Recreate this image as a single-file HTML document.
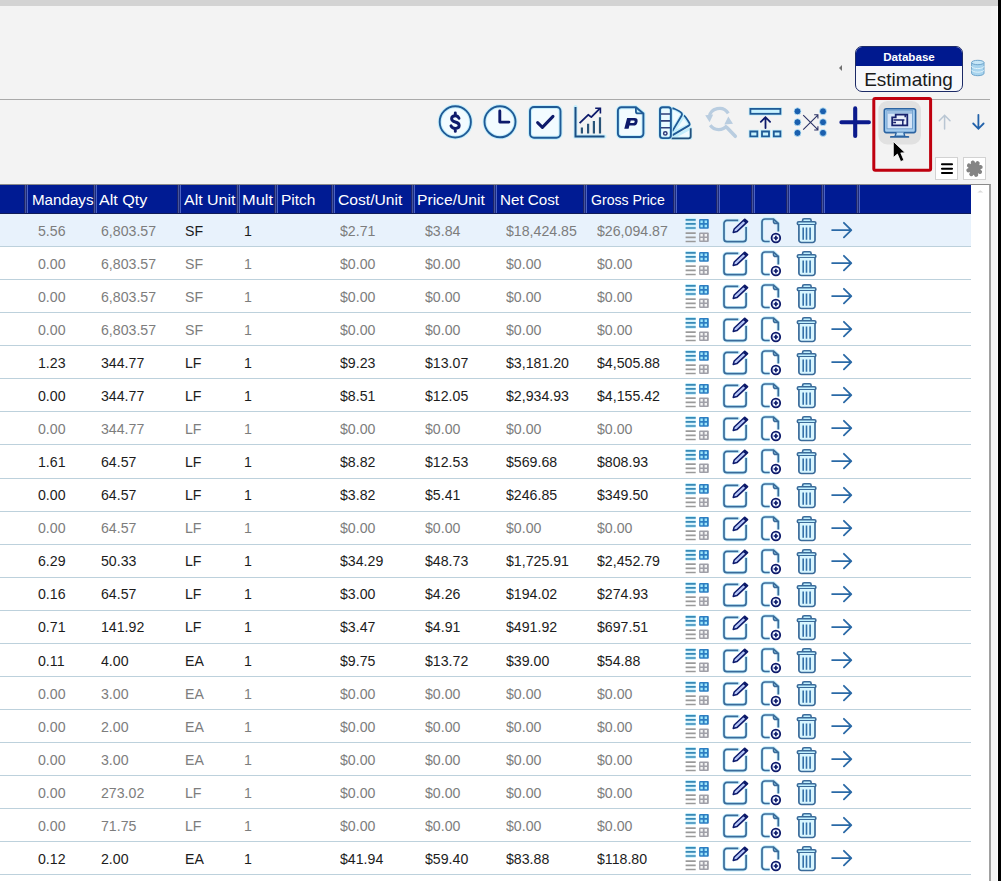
<!DOCTYPE html><html><head><meta charset="utf-8"><style>
*{margin:0;padding:0;box-sizing:border-box}
html,body{width:1001px;height:881px;overflow:hidden;background:#f3f3f3;font-family:"Liberation Sans",sans-serif;position:relative}
.a{position:absolute}
#topbar{left:0;top:0;width:998px;height:6px;background:#d3d3d3}
#blk{left:998px;top:0;width:3px;height:881px;background:#000}
#hline{left:0;top:99px;width:990px;height:1px;background:#a9a9a9}
#grid{left:0;top:184px;width:991px;height:697px;background:#fff;border-top:1px solid #8a8a8a;border-right:2px solid #a0a0a0}
#hdr{left:0;top:185px;width:971px;height:29px;background:#001b93;border-bottom:1px solid #101c58}
.ht{position:absolute;top:191px;transform-origin:0 0;color:#fff;font-size:15.2px;line-height:17px;white-space:nowrap}
.sep{position:absolute;top:185px;width:4px;height:28px;border-left:1px solid #1c2468;border-right:1px solid #4a62c4;background:linear-gradient(90deg,#46559e 0 50%,#1a2a80 50% 100%)}
.row{position:absolute;left:0;width:971px;border-bottom:1px solid #bdd1dc}
.sel{background:#e8f2fc}
.dt{position:absolute;font-size:14.3px;line-height:16px;transform:scale(0.99,1.06);transform-origin:0 13px;white-space:nowrap}

#dbbox{left:854.5px;top:45.5px;width:108px;height:46.5px;border:1.5px solid #1c2a66;border-radius:7px;background:#f7f8fb;overflow:hidden}
#dbh{position:absolute;left:0;top:0;width:100%;height:19px;background:#00198f;color:#fff;font-weight:bold;font-size:11.6px;line-height:19px;text-align:center;padding-left:1px}
#dbv{position:absolute;left:0;top:21.5px;width:100%;text-align:center;font-size:19px;line-height:24px;color:#1a1a1a}
#larr{left:839px;top:65px;width:0;height:0;border-top:3px solid transparent;border-bottom:3px solid transparent;border-right:3px solid #707070}
.btn{position:absolute;top:156.5px;width:23px;height:23px;background:#fff;border:1px solid #d2d2d2}
#scroll{left:971px;top:185px;width:18px;height:696px;background:#fff}
#sgray{left:991px;top:6px;width:7px;height:875px;background:#f5f5f5;border-right:1px solid #fdfdfd}

.g{color:#7d7d7d}.k{color:#1c1c1c}
</style></head><body>
<div class="a" id="sgray"></div>
<div class="a" id="topbar"></div>
<div class="a" id="hline"></div>
<div class="a" id="grid"></div>
<div class="a" id="hdr"></div>
<div class="sep" style="left:24.0px"></div>
<div class="sep" style="left:92.5px"></div>
<div class="sep" style="left:177.0px"></div>
<div class="sep" style="left:236.0px"></div>
<div class="sep" style="left:273.5px"></div>
<div class="sep" style="left:330.5px"></div>
<div class="sep" style="left:410.5px"></div>
<div class="sep" style="left:493.0px"></div>
<div class="sep" style="left:583.0px"></div>
<div class="sep" style="left:673.0px"></div>
<div class="sep" style="left:715.5px"></div>
<div class="sep" style="left:750.5px"></div>
<div class="sep" style="left:785.5px"></div>
<div class="sep" style="left:821.0px"></div>
<div class="sep" style="left:856.4px"></div>
<div class="ht" style="left:31.9px;transform:scaleX(1.0)">Mandays</div>
<div class="ht" style="left:99.4px;transform:scaleX(1.06)">Alt Qty</div>
<div class="ht" style="left:184px;transform:scaleX(1.05)">Alt Unit</div>
<div class="ht" style="left:241.8px;transform:scaleX(1.08)">Mult</div>
<div class="ht" style="left:281.2px;transform:scaleX(1.02)">Pitch</div>
<div class="ht" style="left:338px;transform:scaleX(1.03)">Cost/Unit</div>
<div class="ht" style="left:417px;transform:scaleX(1.03)">Price/Unit</div>
<div class="ht" style="left:500px;transform:scaleX(1.0)">Net Cost</div>
<div class="ht" style="left:590.6px;transform:scaleX(0.93)">Gross Price</div>
<div class="row sel" style="top:214px;height:33px"></div>
<div class="dt g" style="left:37.5px;top:222.6px">5.56</div>
<div class="dt g" style="left:100.5px;top:222.6px">6,803.57</div>
<div class="dt k" style="left:184.5px;top:222.6px">SF</div>
<div class="dt k" style="left:243.5px;top:222.6px">1</div>
<div class="dt g" style="left:339.5px;top:222.6px">$2.71</div>
<div class="dt g" style="left:424.5px;top:222.6px">$3.84</div>
<div class="dt g" style="left:506px;top:222.6px">$18,424.85</div>
<div class="dt g" style="left:597px;top:222.6px">$26,094.87</div>
<div class="row" style="top:247px;height:33px"></div>
<div class="dt g" style="left:37.5px;top:255.7px">0.00</div>
<div class="dt g" style="left:100.5px;top:255.7px">6,803.57</div>
<div class="dt g" style="left:184.5px;top:255.7px">SF</div>
<div class="dt g" style="left:243.5px;top:255.7px">1</div>
<div class="dt g" style="left:339.5px;top:255.7px">$0.00</div>
<div class="dt g" style="left:424.5px;top:255.7px">$0.00</div>
<div class="dt g" style="left:506px;top:255.7px">$0.00</div>
<div class="dt g" style="left:597px;top:255.7px">$0.00</div>
<div class="row" style="top:280px;height:33px"></div>
<div class="dt g" style="left:37.5px;top:288.7px">0.00</div>
<div class="dt g" style="left:100.5px;top:288.7px">6,803.57</div>
<div class="dt g" style="left:184.5px;top:288.7px">SF</div>
<div class="dt g" style="left:243.5px;top:288.7px">1</div>
<div class="dt g" style="left:339.5px;top:288.7px">$0.00</div>
<div class="dt g" style="left:424.5px;top:288.7px">$0.00</div>
<div class="dt g" style="left:506px;top:288.7px">$0.00</div>
<div class="dt g" style="left:597px;top:288.7px">$0.00</div>
<div class="row" style="top:313px;height:33px"></div>
<div class="dt g" style="left:37.5px;top:321.8px">0.00</div>
<div class="dt g" style="left:100.5px;top:321.8px">6,803.57</div>
<div class="dt g" style="left:184.5px;top:321.8px">SF</div>
<div class="dt g" style="left:243.5px;top:321.8px">1</div>
<div class="dt g" style="left:339.5px;top:321.8px">$0.00</div>
<div class="dt g" style="left:424.5px;top:321.8px">$0.00</div>
<div class="dt g" style="left:506px;top:321.8px">$0.00</div>
<div class="dt g" style="left:597px;top:321.8px">$0.00</div>
<div class="row" style="top:346px;height:33px"></div>
<div class="dt k" style="left:37.5px;top:354.9px">1.23</div>
<div class="dt k" style="left:100.5px;top:354.9px">344.77</div>
<div class="dt k" style="left:184.5px;top:354.9px">LF</div>
<div class="dt k" style="left:243.5px;top:354.9px">1</div>
<div class="dt k" style="left:339.5px;top:354.9px">$9.23</div>
<div class="dt k" style="left:424.5px;top:354.9px">$13.07</div>
<div class="dt k" style="left:506px;top:354.9px">$3,181.20</div>
<div class="dt k" style="left:597px;top:354.9px">$4,505.88</div>
<div class="row" style="top:379px;height:33px"></div>
<div class="dt k" style="left:37.5px;top:388.0px">0.00</div>
<div class="dt k" style="left:100.5px;top:388.0px">344.77</div>
<div class="dt k" style="left:184.5px;top:388.0px">LF</div>
<div class="dt k" style="left:243.5px;top:388.0px">1</div>
<div class="dt k" style="left:339.5px;top:388.0px">$8.51</div>
<div class="dt k" style="left:424.5px;top:388.0px">$12.05</div>
<div class="dt k" style="left:506px;top:388.0px">$2,934.93</div>
<div class="dt k" style="left:597px;top:388.0px">$4,155.42</div>
<div class="row" style="top:412px;height:33px"></div>
<div class="dt g" style="left:37.5px;top:421.0px">0.00</div>
<div class="dt g" style="left:100.5px;top:421.0px">344.77</div>
<div class="dt g" style="left:184.5px;top:421.0px">LF</div>
<div class="dt g" style="left:243.5px;top:421.0px">1</div>
<div class="dt g" style="left:339.5px;top:421.0px">$0.00</div>
<div class="dt g" style="left:424.5px;top:421.0px">$0.00</div>
<div class="dt g" style="left:506px;top:421.0px">$0.00</div>
<div class="dt g" style="left:597px;top:421.0px">$0.00</div>
<div class="row" style="top:445px;height:34px"></div>
<div class="dt k" style="left:37.5px;top:454.1px">1.61</div>
<div class="dt k" style="left:100.5px;top:454.1px">64.57</div>
<div class="dt k" style="left:184.5px;top:454.1px">LF</div>
<div class="dt k" style="left:243.5px;top:454.1px">1</div>
<div class="dt k" style="left:339.5px;top:454.1px">$8.82</div>
<div class="dt k" style="left:424.5px;top:454.1px">$12.53</div>
<div class="dt k" style="left:506px;top:454.1px">$569.68</div>
<div class="dt k" style="left:597px;top:454.1px">$808.93</div>
<div class="row" style="top:479px;height:33px"></div>
<div class="dt k" style="left:37.5px;top:487.2px">0.00</div>
<div class="dt k" style="left:100.5px;top:487.2px">64.57</div>
<div class="dt k" style="left:184.5px;top:487.2px">LF</div>
<div class="dt k" style="left:243.5px;top:487.2px">1</div>
<div class="dt k" style="left:339.5px;top:487.2px">$3.82</div>
<div class="dt k" style="left:424.5px;top:487.2px">$5.41</div>
<div class="dt k" style="left:506px;top:487.2px">$246.85</div>
<div class="dt k" style="left:597px;top:487.2px">$349.50</div>
<div class="row" style="top:512px;height:33px"></div>
<div class="dt g" style="left:37.5px;top:520.2px">0.00</div>
<div class="dt g" style="left:100.5px;top:520.2px">64.57</div>
<div class="dt g" style="left:184.5px;top:520.2px">LF</div>
<div class="dt g" style="left:243.5px;top:520.2px">1</div>
<div class="dt g" style="left:339.5px;top:520.2px">$0.00</div>
<div class="dt g" style="left:424.5px;top:520.2px">$0.00</div>
<div class="dt g" style="left:506px;top:520.2px">$0.00</div>
<div class="dt g" style="left:597px;top:520.2px">$0.00</div>
<div class="row" style="top:545px;height:33px"></div>
<div class="dt k" style="left:37.5px;top:553.3px">6.29</div>
<div class="dt k" style="left:100.5px;top:553.3px">50.33</div>
<div class="dt k" style="left:184.5px;top:553.3px">LF</div>
<div class="dt k" style="left:243.5px;top:553.3px">1</div>
<div class="dt k" style="left:339.5px;top:553.3px">$34.29</div>
<div class="dt k" style="left:424.5px;top:553.3px">$48.73</div>
<div class="dt k" style="left:506px;top:553.3px">$1,725.91</div>
<div class="dt k" style="left:597px;top:553.3px">$2,452.79</div>
<div class="row" style="top:578px;height:33px"></div>
<div class="dt k" style="left:37.5px;top:586.4px">0.16</div>
<div class="dt k" style="left:100.5px;top:586.4px">64.57</div>
<div class="dt k" style="left:184.5px;top:586.4px">LF</div>
<div class="dt k" style="left:243.5px;top:586.4px">1</div>
<div class="dt k" style="left:339.5px;top:586.4px">$3.00</div>
<div class="dt k" style="left:424.5px;top:586.4px">$4.26</div>
<div class="dt k" style="left:506px;top:586.4px">$194.02</div>
<div class="dt k" style="left:597px;top:586.4px">$274.93</div>
<div class="row" style="top:611px;height:33px"></div>
<div class="dt k" style="left:37.5px;top:619.4px">0.71</div>
<div class="dt k" style="left:100.5px;top:619.4px">141.92</div>
<div class="dt k" style="left:184.5px;top:619.4px">LF</div>
<div class="dt k" style="left:243.5px;top:619.4px">1</div>
<div class="dt k" style="left:339.5px;top:619.4px">$3.47</div>
<div class="dt k" style="left:424.5px;top:619.4px">$4.91</div>
<div class="dt k" style="left:506px;top:619.4px">$491.92</div>
<div class="dt k" style="left:597px;top:619.4px">$697.51</div>
<div class="row" style="top:644px;height:33px"></div>
<div class="dt k" style="left:37.5px;top:652.5px">0.11</div>
<div class="dt k" style="left:100.5px;top:652.5px">4.00</div>
<div class="dt k" style="left:184.5px;top:652.5px">EA</div>
<div class="dt k" style="left:243.5px;top:652.5px">1</div>
<div class="dt k" style="left:339.5px;top:652.5px">$9.75</div>
<div class="dt k" style="left:424.5px;top:652.5px">$13.72</div>
<div class="dt k" style="left:506px;top:652.5px">$39.00</div>
<div class="dt k" style="left:597px;top:652.5px">$54.88</div>
<div class="row" style="top:677px;height:33px"></div>
<div class="dt g" style="left:37.5px;top:685.6px">0.00</div>
<div class="dt g" style="left:100.5px;top:685.6px">3.00</div>
<div class="dt g" style="left:184.5px;top:685.6px">EA</div>
<div class="dt g" style="left:243.5px;top:685.6px">1</div>
<div class="dt g" style="left:339.5px;top:685.6px">$0.00</div>
<div class="dt g" style="left:424.5px;top:685.6px">$0.00</div>
<div class="dt g" style="left:506px;top:685.6px">$0.00</div>
<div class="dt g" style="left:597px;top:685.6px">$0.00</div>
<div class="row" style="top:710px;height:33px"></div>
<div class="dt g" style="left:37.5px;top:718.6px">0.00</div>
<div class="dt g" style="left:100.5px;top:718.6px">2.00</div>
<div class="dt g" style="left:184.5px;top:718.6px">EA</div>
<div class="dt g" style="left:243.5px;top:718.6px">1</div>
<div class="dt g" style="left:339.5px;top:718.6px">$0.00</div>
<div class="dt g" style="left:424.5px;top:718.6px">$0.00</div>
<div class="dt g" style="left:506px;top:718.6px">$0.00</div>
<div class="dt g" style="left:597px;top:718.6px">$0.00</div>
<div class="row" style="top:743px;height:33px"></div>
<div class="dt g" style="left:37.5px;top:751.7px">0.00</div>
<div class="dt g" style="left:100.5px;top:751.7px">3.00</div>
<div class="dt g" style="left:184.5px;top:751.7px">EA</div>
<div class="dt g" style="left:243.5px;top:751.7px">1</div>
<div class="dt g" style="left:339.5px;top:751.7px">$0.00</div>
<div class="dt g" style="left:424.5px;top:751.7px">$0.00</div>
<div class="dt g" style="left:506px;top:751.7px">$0.00</div>
<div class="dt g" style="left:597px;top:751.7px">$0.00</div>
<div class="row" style="top:776px;height:33px"></div>
<div class="dt g" style="left:37.5px;top:784.8px">0.00</div>
<div class="dt g" style="left:100.5px;top:784.8px">273.02</div>
<div class="dt g" style="left:184.5px;top:784.8px">LF</div>
<div class="dt g" style="left:243.5px;top:784.8px">1</div>
<div class="dt g" style="left:339.5px;top:784.8px">$0.00</div>
<div class="dt g" style="left:424.5px;top:784.8px">$0.00</div>
<div class="dt g" style="left:506px;top:784.8px">$0.00</div>
<div class="dt g" style="left:597px;top:784.8px">$0.00</div>
<div class="row" style="top:809px;height:33px"></div>
<div class="dt g" style="left:37.5px;top:817.9px">0.00</div>
<div class="dt g" style="left:100.5px;top:817.9px">71.75</div>
<div class="dt g" style="left:184.5px;top:817.9px">LF</div>
<div class="dt g" style="left:243.5px;top:817.9px">1</div>
<div class="dt g" style="left:339.5px;top:817.9px">$0.00</div>
<div class="dt g" style="left:424.5px;top:817.9px">$0.00</div>
<div class="dt g" style="left:506px;top:817.9px">$0.00</div>
<div class="dt g" style="left:597px;top:817.9px">$0.00</div>
<div class="row" style="top:842px;height:33px"></div>
<div class="dt k" style="left:37.5px;top:850.9px">0.12</div>
<div class="dt k" style="left:100.5px;top:850.9px">2.00</div>
<div class="dt k" style="left:184.5px;top:850.9px">EA</div>
<div class="dt k" style="left:243.5px;top:850.9px">1</div>
<div class="dt k" style="left:339.5px;top:850.9px">$41.94</div>
<div class="dt k" style="left:424.5px;top:850.9px">$59.40</div>
<div class="dt k" style="left:506px;top:850.9px">$83.88</div>
<div class="dt k" style="left:597px;top:850.9px">$118.80</div>
<div class="a" id="dbbox"><div id="dbh">Database</div><div id="dbv">Estimating</div></div>
<div class="a" id="larr"></div>
<div class="btn" style="left:935px"><svg width="23" height="23" style="position:absolute;left:-1px;top:-1px"><path d="M7 7.3 H17 M7 11.7 H17 M7 16 H17" stroke="#000" stroke-width="2.1" stroke-linecap="round"/></svg></div>
<div class="btn" style="left:963px"><svg width="23" height="23" style="position:absolute;left:-1px;top:-1px"><g transform="translate(11.5,11.7) rotate(-15)" fill="#848484"><circle r="6.2"/><circle cx="0" cy="-6.3" r="2.1" transform="rotate(0)"/><circle cx="0" cy="-6.3" r="2.1" transform="rotate(45)"/><circle cx="0" cy="-6.3" r="2.1" transform="rotate(90)"/><circle cx="0" cy="-6.3" r="2.1" transform="rotate(135)"/><circle cx="0" cy="-6.3" r="2.1" transform="rotate(180)"/><circle cx="0" cy="-6.3" r="2.1" transform="rotate(225)"/><circle cx="0" cy="-6.3" r="2.1" transform="rotate(270)"/><circle cx="0" cy="-6.3" r="2.1" transform="rotate(315)"/></g></svg></div>
<div class="a" id="scroll"></div>
<svg class="a" style="left:0;top:0" width="1001" height="881"><use href="#ri" y="214"/><use href="#ri" y="247"/><use href="#ri" y="280"/><use href="#ri" y="313"/><use href="#ri" y="346"/><use href="#ri" y="379"/><use href="#ri" y="412"/><use href="#ri" y="445"/><use href="#ri" y="479"/><use href="#ri" y="512"/><use href="#ri" y="545"/><use href="#ri" y="578"/><use href="#ri" y="611"/><use href="#ri" y="644"/><use href="#ri" y="677"/><use href="#ri" y="710"/><use href="#ri" y="743"/><use href="#ri" y="776"/><use href="#ri" y="809"/><use href="#ri" y="842"/><defs><g id="ri"><g transform="translate(680,0)"><path d="M5.6 5.8 H15.7 M5.6 9.9 H15.7 M5.6 14 H15.7" stroke="#c4eefc" stroke-width="3.4"/><path d="M5.6 5.8 H15.7 M5.6 9.9 H15.7 M5.6 14 H15.7" stroke="#3889b6" stroke-width="1.7"/><rect x="19.1" y="5.1" width="9.7" height="9.7" rx="1" fill="#2c7ec2"/><path d="M20.4 6.6 h2.4 v2.4 h-2.4Z M24.6 6.6 h2.4 v2.4 h-2.4Z M20.4 10.8 h2.4 v2.4 h-2.4Z M24.6 10.8 h2.4 v2.4 h-2.4Z" fill="#9fe6fb"/><path d="M5.6 19.1 H15.7 M5.6 23.4 H15.7 M5.6 27.5 H15.7" stroke="#9a9a9a" stroke-width="1.7"/><rect x="19.1" y="18.4" width="9.7" height="9.5" rx="1" fill="#a0a0a8"/><path d="M20.4 20 h2.4 v2.4 h-2.4Z M24.6 20 h2.4 v2.4 h-2.4Z M20.4 24.1 h2.4 v2.4 h-2.4Z M24.6 24.1 h2.4 v2.4 h-2.4Z" fill="#f4f4f4"/></g><g transform="translate(718,0)"><path d="M20.2 6.4 H9 A3 3 0 0 0 6 9.4 V24.7 A3 3 0 0 0 9 27.7 H25.1 A3 3 0 0 0 28.1 24.7 V13.1" fill="none" stroke="#c4eefc" stroke-width="3.4" stroke-linecap="round"/><path d="M20.2 6.4 H9 A3 3 0 0 0 6 9.4 V24.7 A3 3 0 0 0 9 27.7 H25.1 A3 3 0 0 0 28.1 24.7 V13.1" fill="none" stroke="#3a6b9a" stroke-width="1.7"/><path d="M15.2 18.4 L16.2 15 L26.6 5.2 L29.6 7.6 L18.9 17.6 Z" fill="#b8c8f8" stroke="#0d1a6b" stroke-width="1.5" stroke-linejoin="round"/><path d="M25.6 6.2 L28.6 8.6" stroke="#0d1a6b" stroke-width="2.2"/></g><g transform="translate(754,0)"><path d="M15.7 27.5 H11 A3 3 0 0 1 8 24.5 V8 A3 3 0 0 1 11 5 H19.5 L24.3 9.4 V17.6" fill="none" stroke="#c4eefc" stroke-width="3.4"/><path d="M19.5 5.4 V7.4 A2 2 0 0 0 21.5 9.4 H24" fill="#a8e8fb" stroke="#3a6b9a" stroke-width="1.6"/><path d="M15.7 27.5 H11 A3 3 0 0 1 8 24.5 V8 A3 3 0 0 1 11 5 H19.5 L24.3 9.4 V17.6" fill="none" stroke="#3a6b9a" stroke-width="1.7"/><circle cx="21.9" cy="24" r="4.3" fill="#eef4ff" stroke="#0d1a6b" stroke-width="1.8"/><path d="M21.9 21.8 V26.2 M19.7 24 H24.1" stroke="#0d1a6b" stroke-width="1.7"/></g><g transform="translate(788,0)"><path d="M14.6 7.4 V6.2 A1.5 1.5 0 0 1 16.1 4.7 H21.6 A1.5 1.5 0 0 1 23.1 6.2 V7.4" fill="#c0f0ff" stroke="#3a6b9a" stroke-width="1.6"/><rect x="9.3" y="7.8" width="18.6" height="3" rx="1.5" fill="#c0f0ff" stroke="#3a6b9a" stroke-width="1.6"/><path d="M10.9 10.9 V26 A2.5 2.5 0 0 0 13.4 28.5 H24.5 A2.5 2.5 0 0 0 27 26 V10.9" fill="#d8f6ff" stroke="#3a6b9a" stroke-width="1.7"/><path d="M15.2 13.5 V25.8 M18.5 13.5 V25.8 M22.1 13.5 V25.8" stroke="#3470a8" stroke-width="1.6"/></g><g transform="translate(824,0)"><path d="M8.1 16.1 H27.1 M19.9 8.8 L27.3 16.1 L19.9 23.4" fill="none" stroke="#2a69a6" stroke-width="1.8" stroke-linecap="round" stroke-linejoin="round"/></g></g></defs><path d="M977.3 192.6 L980.3 190.2 L983.3 192.6 Z" fill="#dadada"/></svg>
<svg class="a" style="left:0;top:0" width="1001" height="200" viewBox="0 0 1001 200"><g transform="translate(436,102)"><circle cx="19.3" cy="19.9" r="15.6" fill="#f2fbff" stroke="#c4eefc" stroke-width="4"/><circle cx="19.3" cy="19.9" r="15.6" fill="none" stroke="#1f5a96" stroke-width="1.9"/><path d="M23 16.3 Q21.9 13.7 19.3 13.7 Q15.6 13.7 15.6 16.8 Q15.6 19.1 19.3 20 Q23.2 21 23.2 23.5 Q23.2 26.4 19.3 26.4 Q16.2 26.4 15 23.8 M19.3 10.9 V13.7 M19.3 26.4 V29.4" fill="none" stroke="#0d1a6b" stroke-width="2.9" stroke-linecap="round"/></g><g transform="translate(480,102)"><circle cx="20" cy="19.8" r="15.5" fill="#f2fbff" stroke="#c4eefc" stroke-width="4"/><circle cx="20" cy="19.8" r="15.5" fill="none" stroke="#1f5a96" stroke-width="1.9"/><path d="M19.8 9 V20.1 H28.9" fill="none" stroke="#0d1a6b" stroke-width="2.9" stroke-linecap="round" stroke-linejoin="round"/></g><g transform="translate(525,102)"><rect x="5" y="5" width="30.5" height="30.7" rx="4" fill="#f2fbff" stroke="#c4eefc" stroke-width="4"/><rect x="5" y="5" width="30.5" height="30.7" rx="4" fill="none" stroke="#1f5a96" stroke-width="1.9"/><path d="M12.6 20.6 L17.4 25.4 L28 14.4" fill="none" stroke="#0d1a6b" stroke-width="3" stroke-linecap="round" stroke-linejoin="round"/></g><g transform="translate(570,102)"><path d="M5.5 5 V34.4 H34.5" fill="none" stroke="#c4eefc" stroke-width="4" stroke-linecap="round"/><path d="M5.5 5 V34.4 H34.5" fill="none" stroke="#1b4d82" stroke-width="2"/><path d="M11.9 25.5 V31.5 M18.1 21.8 V31.5 M23.9 18.9 V31.5 M30 15.2 V31.5" stroke="#2a5478" stroke-width="2.2"/><path d="M9.6 21.2 L18.2 12.8 L21.3 15.1 L30 6.3" fill="none" stroke="#0d1a6b" stroke-width="1.8" stroke-linejoin="round"/><path d="M25.2 6.2 H30.4 V11.4" fill="none" stroke="#0d1a6b" stroke-width="1.6"/></g><g transform="translate(612,102)"><path d="M9.4 5.2 H23.9 L31.4 11.4 V31.5 A3.5 3.5 0 0 1 27.9 35 H9.4 A3.5 3.5 0 0 1 5.9 31.5 V8.7 A3.5 3.5 0 0 1 9.4 5.2 Z" fill="#f2fbff" stroke="#c4eefc" stroke-width="4"/><path d="M23.9 5.6 V9.4 A2 2 0 0 0 25.9 11.4 H31" fill="#c0ecfb" stroke="#1f5a96" stroke-width="1.8"/><path d="M9.4 5.2 H23.9 L31.4 11.4 V31.5 A3.5 3.5 0 0 1 27.9 35 H9.4 A3.5 3.5 0 0 1 5.9 31.5 V8.7 A3.5 3.5 0 0 1 9.4 5.2 Z" fill="none" stroke="#1f5a96" stroke-width="1.9"/><path fill-rule="evenodd" d="M12.3 26.8 L15.1 16.1 L22.6 16.1 Q25.9 16.1 25.6 19.4 Q25.1 23.6 21.3 23.6 L17.4 23.6 L16.6 26.8 Z M18.1 21 L21.1 21 Q22.5 21 22.7 19.8 Q22.9 18.6 21.5 18.6 L18.7 18.6 Z" fill="#0d1a6b"/></g><g transform="translate(655,102)"><path d="M16 6.5 L18.5 6.5 L27.2 11.6 L17.3 29 Z M17.5 31 L28.8 13.6 L34.6 22.6 Z M17 36.2 L35.7 26 L35.7 36.2 Z" fill="#f0fbff" stroke="#c4eefc" stroke-width="3" stroke-linejoin="round"/><path d="M16.2 6.8 L18.7 6.5 Q25.5 9.4 26.7 11.2 Q27.4 12.5 26.7 13.5 L17.2 29.4" fill="none" stroke="#1f5a96" stroke-width="1.8" stroke-linejoin="round"/><path d="M28.9 13.6 Q30.3 14 34.5 21.3 Q35.2 22.8 33.8 23.6 L17.2 33.4" fill="none" stroke="#1f5a96" stroke-width="1.8" stroke-linejoin="round"/><path d="M35.7 26.2 V34.4 A2 2 0 0 1 33.7 36.3 H16.5" fill="none" stroke="#24507c" stroke-width="1.8"/><rect x="5" y="5.2" width="10.9" height="30.9" rx="2.6" fill="#eafaff" stroke="#c4eefc" stroke-width="3.6"/><rect x="5" y="5.2" width="10.9" height="30.9" rx="2.6" fill="none" stroke="#1f5a96" stroke-width="1.9"/><path d="M6 12 H15 M6 18.9 H15 M6 25.7 H15" stroke="#2e3f7a" stroke-width="1.6"/><circle cx="10.3" cy="31.4" r="1.7" fill="none" stroke="#2e3a7a" stroke-width="1.5"/></g><g transform="translate(700,102)" opacity="1"><path d="M28.3 11.3 A10.5 10.5 0 0 0 9 15.5" fill="none" stroke="#b9cde0" stroke-width="3.2"/><path d="M5.2 13.2 L13.2 12.6 L9.6 20.3 Z" fill="#b9cde0"/><path d="M10.2 23.3 A10.5 10.5 0 0 0 27 23.5" fill="none" stroke="#b9cde0" stroke-width="3.2"/><path d="M24.3 22.4 L33 21.7 L28.3 14.4 Z" fill="#b9cde0"/><path d="M27.6 26.2 L35.3 34.3" stroke="#b9cde0" stroke-width="3.5" stroke-linecap="round"/></g><g transform="translate(745,102)"><rect x="5.4" y="6.9" width="30" height="4.9" fill="#c8f2ff" stroke="#c4eefc" stroke-width="3.4"/><rect x="5.4" y="6.9" width="30" height="4.9" fill="#c8f2ff" stroke="#1f5a96" stroke-width="1.8"/><path d="M20.5 26 V15.6 M15.8 19.8 L20.5 15.2 L25.1 19.8" fill="none" stroke="#0d1a6b" stroke-width="1.8" stroke-linecap="round"/><path d="M5.3 29.5 h7 v4.8 h-7 Z M17 29.5 h7 v4.8 h-7 Z M28.8 29.5 h6.6 v4.8 h-6.6 Z" fill="#c8f2ff" stroke="#c4eefc" stroke-width="3.6"/><path d="M5.3 29.5 h7 v4.8 h-7 Z M17 29.5 h7 v4.8 h-7 Z M28.8 29.5 h6.6 v4.8 h-6.6 Z" fill="#c8f2ff" stroke="#1f5a96" stroke-width="1.8"/></g><g transform="translate(790,102)"><circle cx="7.5" cy="9.3" r="3.5" fill="#1a5fae" stroke="#c4eefc" stroke-width="0.8"/><circle cx="7.5" cy="20.2" r="3.5" fill="#1a5fae" stroke="#c4eefc" stroke-width="0.8"/><circle cx="7.5" cy="30.9" r="3.5" fill="#1a5fae" stroke="#c4eefc" stroke-width="0.8"/><circle cx="33" cy="9.3" r="3.5" fill="#1a5fae" stroke="#c4eefc" stroke-width="0.8"/><circle cx="33" cy="20.2" r="3.5" fill="#1a5fae" stroke="#c4eefc" stroke-width="0.8"/><circle cx="33" cy="30.9" r="3.5" fill="#1a5fae" stroke="#c4eefc" stroke-width="0.8"/><path d="M13.2 13.2 L27.8 27.6 M13.2 27.7 L27.8 13.1 M24.2 12.8 H27.9 V16.5 M24.2 28 H27.9 V24.3" fill="none" stroke="#2a3366" stroke-width="1.1"/></g><g transform="translate(835,102)"><path d="M20.2 6.4 V33.9 M6.4 20.2 H33.9" stroke="#0b1a8c" stroke-width="4.1" stroke-linecap="round"/></g><rect x="878.3" y="101" width="42.7" height="43.5" rx="9" fill="#e1e1e1"/><g transform="translate(870,95)"><rect x="14.3" y="13.7" width="31.3" height="23.9" rx="2" fill="#a6cdef" stroke="#2c64a2" stroke-width="1.6"/><rect x="17" y="15.4" width="25.5" height="18.4" fill="#d6e5f8" stroke="#6d9ccc" stroke-width="0.9"/><rect x="17.4" y="15.8" width="24.7" height="3" fill="#9dbfe2"/><path d="M26.3 37.6 L25 41.3 H34.8 L33.8 37.6" fill="#c4e2f8" stroke="#2c64a2" stroke-width="1.4"/><path d="M20.8 41.9 H38.4" stroke="#2c64a2" stroke-width="1.7" stroke-linecap="round"/><path d="M22.2 30.3 V22.4 H25.7 V19.7 H37.3 V30.3 Z" fill="#e8eefa" stroke="#18226e" stroke-width="1.8"/><path d="M23.4 24.9 H34.4 M32.8 24.9 V30.3 M35.2 19.7 V22.2 M23.2 27.6 H26" fill="none" stroke="#18226e" stroke-width="1.5"/></g><rect x="873.8" y="98.5" width="56.8" height="71.7" rx="1.5" fill="none" stroke="#bf000e" stroke-width="3"/><path d="M893.3 141.4 L893.3 157.6 L897.4 154 L900.7 161.6 L903.9 160.2 L900.8 152.9 L905.2 152.8 Z" fill="#000" stroke="#fff" stroke-width="0.8" stroke-linejoin="round"/><path d="M944.6 129 V115.5 M939.3 120.7 L944.6 115.3 L950 120.7" fill="none" stroke="#b9c6d3" stroke-width="1.5" stroke-linecap="round"/><path d="M978.4 114.8 V128.5 M973.2 123.5 L978.4 128.8 L983.6 123.5" fill="none" stroke="#2262aa" stroke-width="1.8" stroke-linecap="round"/><g transform="translate(971,60)"><path d="M0.6 2.5 V13.3 A6.2 2.4 0 0 0 13 13.3 V2.5" fill="#a8d4ee" stroke="#6fa5cc" stroke-width="1"/><ellipse cx="6.8" cy="2.5" rx="6.2" ry="2.2" fill="#c6e6f7" stroke="#6fa5cc" stroke-width="1"/><path d="M0.6 6.2 A6.2 2.4 0 0 0 13 6.2 M0.6 9.8 A6.2 2.4 0 0 0 13 9.8" fill="none" stroke="#e0f2fb" stroke-width="1"/></g></svg>
<div class="a" id="blk"></div>
</body></html>
